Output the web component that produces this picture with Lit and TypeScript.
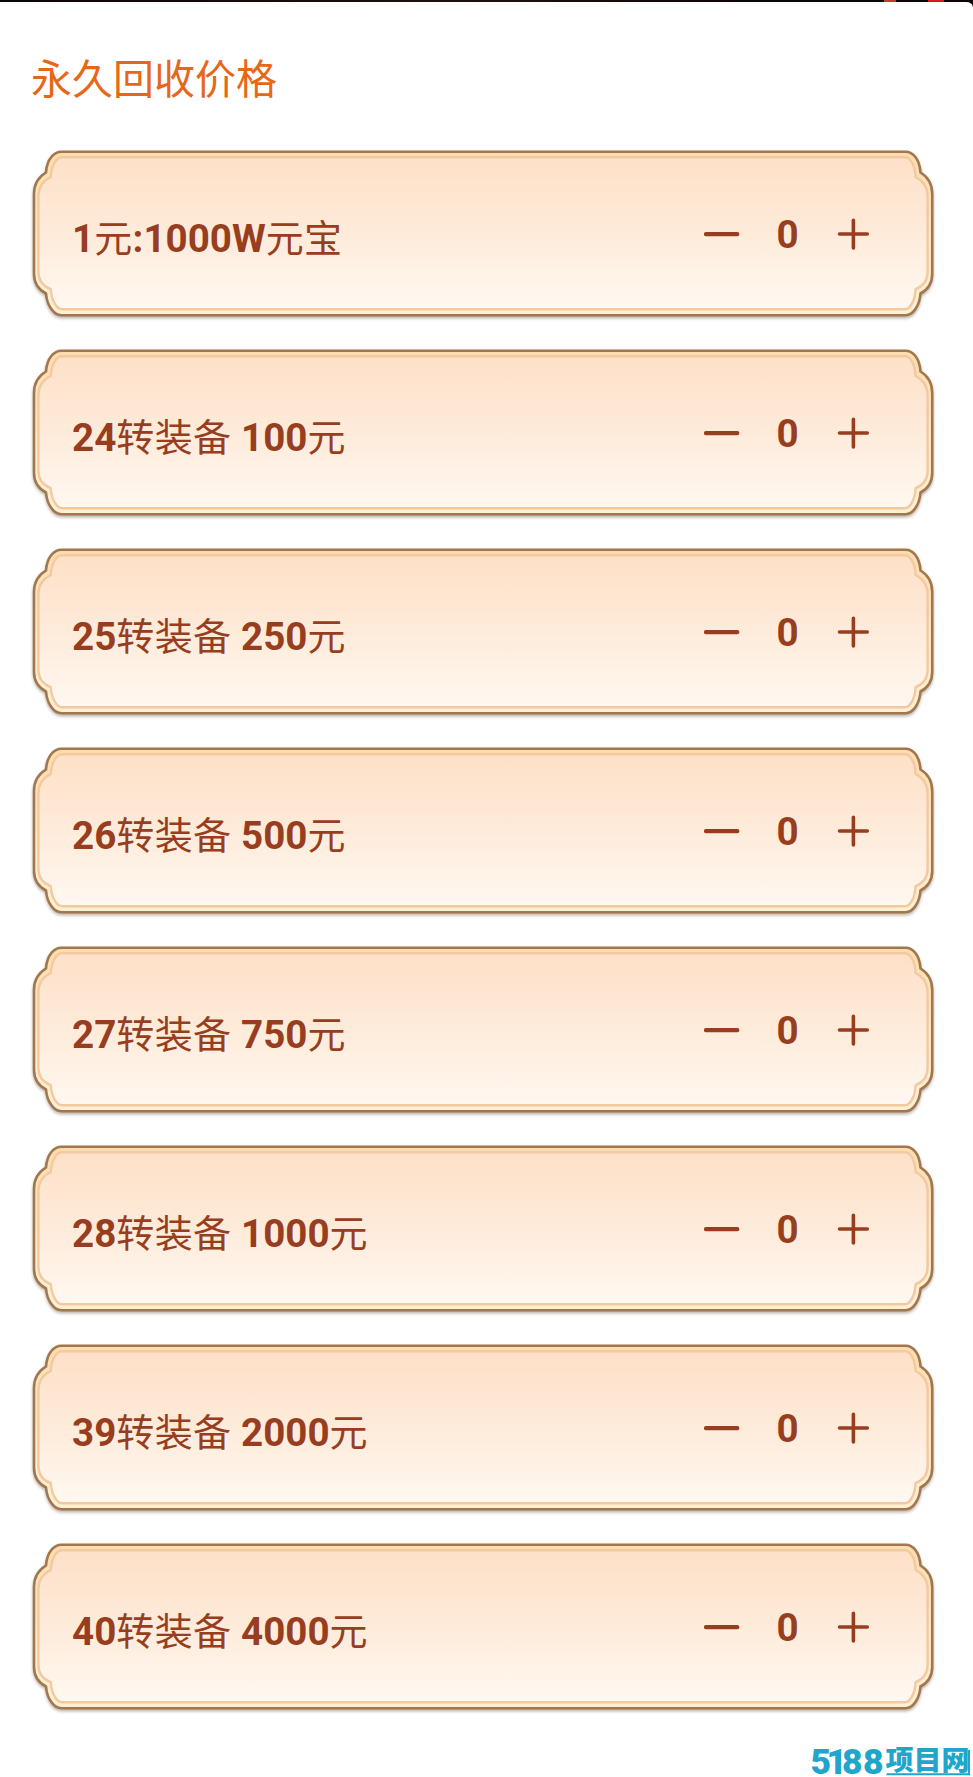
import { LitElement, html, css } from "lit";
import { customElement, property, state } from "lit/decorators.js";

const OUTER =
  "M28.5 1.7H872.5C880 1.7 886.5 9 887.5 22.5C895 27 899.2 34 899.2 44V124C899.2 133 895 139.500 887.5 143.5C886.5 156 880 165.300 872.5 165.300H28.5C21 165.300 14 156 13 143.5C5.500 139.500 1 133 1 124V44C1 34 5.500 27 13 22.5C14 9 21 1.7 28.5 1.7Z";
const INNER =
  "M29 7.300H872C877 7.300 882 14 882.600 27C890.500 31 894.600 37 894.600 46V122C894.600 130 890.500 136 882.600 139.200C882 151 877 159.300 872 159.300H29C24 159.300 18.500 151 17.700 139.200C9.500 136 5.400 130 5.400 122V46C5.400 37 9.500 31 17.700 27C18.500 14 24 7.300 29 7.300Z";

@customElement("price-card")
class PriceCard extends LitElement {
  @property() label = "";
  @state() private count = 0;

  static styles = css`
    :host { display: block; height: 167px; position: relative; color: #983e20; }
    .frame { position: absolute; inset: 0; width: 900px; height: 167px; overflow: visible; filter: drop-shadow(0 2px 1.5px rgba(70, 45, 30, 0.35)); }
    .row { position: relative; height: 167px; display: flex; align-items: center; justify-content: space-between; padding: 0 62px 0 39px; }
    .label { font: 700 38.6px/46px Roboto, "Noto Sans CJK SC", sans-serif; white-space: pre; padding-top: 8px; }
    .han { font-family: "Noto Sans CJK SC", sans-serif; font-weight: 400; font-size: 38px; letter-spacing: 0.4px; }
    .stepper { display: flex; align-items: center; padding-top: 1px; }
    button { all: unset; display: block; width: 36px; height: 36px; cursor: pointer; }
    .icon { display: block; width: 36px; height: 36px; }
    .count { width: 95px; text-align: center; font: 700 38.6px/46px Roboto, sans-serif; padding-top: 2px; }
  `;

  render() {
    const parts = this.label.split(/([\u4e00-\u9fff]+)/).filter(Boolean);
    return html`
      <svg class="frame" viewBox="0 0 900 167">
        <defs>
          <linearGradient id="fill" x1="0" y1="0" x2="0" y2="1">
            <stop offset="0" stop-color="#fee0c7" />
            <stop offset="0.5" stop-color="#feebda" />
            <stop offset="1" stop-color="#fff8f1" />
          </linearGradient>
          <linearGradient id="rim" x1="0" y1="0" x2="0" y2="1">
            <stop offset="0" stop-color="#fddcae" />
            <stop offset="0.5" stop-color="#feebc9" />
            <stop offset="1" stop-color="#fff0d3" />
          </linearGradient>
        </defs>
        <path d=${OUTER} fill="url(#rim)" stroke="#a3774e" stroke-width="2.6" />
        <path d=${INNER} fill="url(#fill)" stroke="#f2c9a0" stroke-width="2.4" />
      </svg>
      <div class="row">
        <div class="label">${parts.map((p) => (/[\u4e00-\u9fff]/.test(p) ? html`<span class="han">${p}</span>` : p))}</div>
        <div class="stepper">
          <button aria-label="-" @click=${() => (this.count = Math.max(0, this.count - 1))}>
            <svg class="icon" viewBox="0 0 36 36"><path d="M2 18.200H33.300" stroke="currentColor" stroke-width="4.200" stroke-linecap="round" /></svg>
          </button>
          <div class="count">${this.count}</div>
          <button aria-label="+" @click=${() => (this.count += 1)}>
            <svg class="icon" viewBox="0 0 36 36"><path d="M4.500 18H32.300M18.400 4.200V32" stroke="currentColor" stroke-width="3.600" stroke-linecap="round" /></svg>
          </button>
        </div>
      </div>
    `;
  }
}

@customElement("app-root")
class AppRoot extends LitElement {
  static styles = css`
    :host { display: block; position: relative; height: 1777px; overflow: hidden; background: linear-gradient(90deg, #0c0506, #1c1110 50%, #0c0506 78%, #0c0506 100%) 0 0 / 100% 8px no-repeat; }
    .embers { position: absolute; top: 0; left: 884px; width: 60px; height: 2px; background: linear-gradient(90deg, #c33b31 0 12px, #0c0506 12px 44px, #d01b20 44px 60px); }
    .sheet { box-sizing: border-box; height: 100%; border-top: 2px solid transparent; border-top-right-radius: 7px; background: #fff padding-box; padding: 0 40px 0 33px; }
    h1 { margin: 0; height: 148px; box-sizing: border-box; padding-top: 44px; font: 400 41px/60px "Noto Sans CJK SC", sans-serif; color: #e76718; margin-left: -2px; }
    .list { display: flex; flex-direction: column; gap: 32px; }
    .mark { position: absolute; left: 808px; top: 1740px; width: 165px; height: 37px; overflow: visible; }
    .digits { font: 900 35.500px Roboto, sans-serif; fill: #20a5cb; }
    .name { font: 900 27.500px "Noto Sans CJK SC", sans-serif; fill: #20a5cb; }
  `;

  private labels = [
    "1元:1000W元宝",
    "24转装备 100元",
    "25转装备 250元",
    "26转装备 500元",
    "27转装备 750元",
    "28转装备 1000元",
    "39转装备 2000元",
    "40转装备 4000元",
  ];

  render() {
    return html`
      <div class="embers"></div>
      <main class="sheet">
        <h1>永久回收价格</h1>
        <div class="list">${this.labels.map((l) => html`<price-card .label=${l}></price-card>`)}</div>
      </main>
      <svg class="mark" viewBox="0 0 165 37">
        <text class="digits" x="2.500 18.500 34 55" y="34">5188</text>
        <text class="name" x="77.500" y="30" textLength="84" lengthAdjust="spacingAndGlyphs">项目网</text>
        <path d="M78.500 34.300H161V10" fill="none" stroke="#20a5cb" stroke-width="2" />
      </svg>
    `;
  }
}
